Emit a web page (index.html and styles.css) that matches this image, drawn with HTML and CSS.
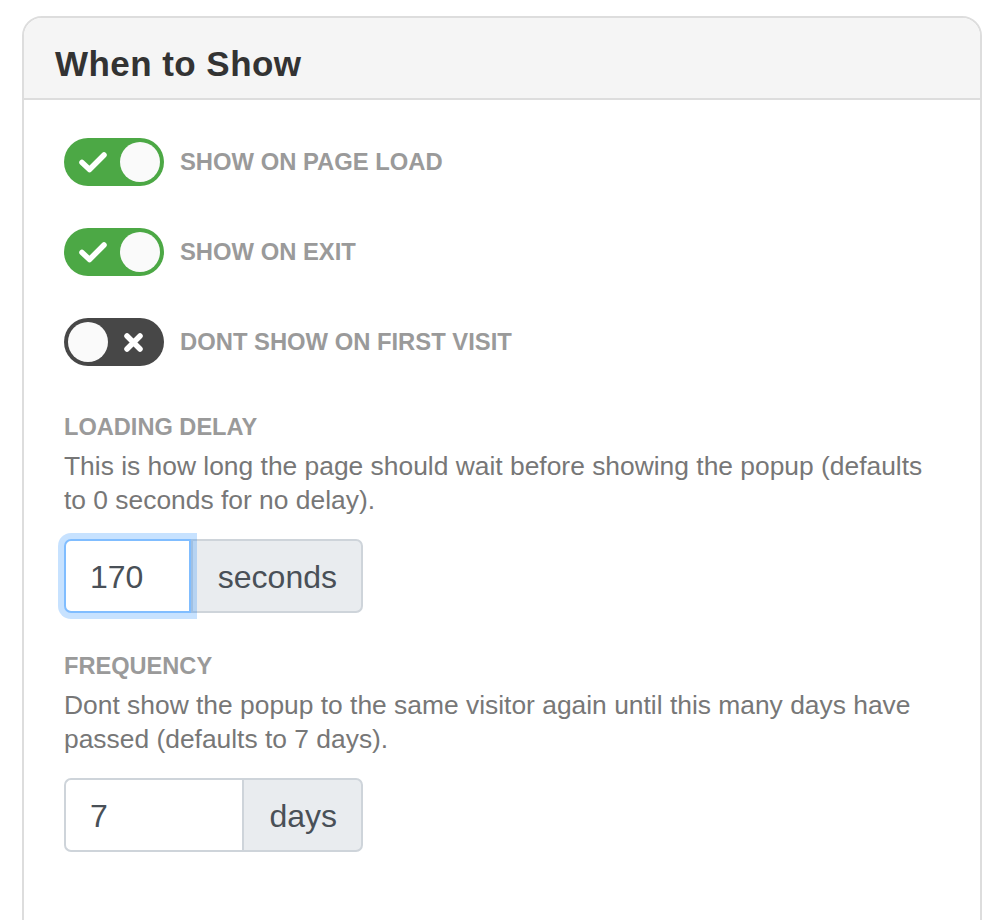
FILE: index.html
```html
<!DOCTYPE html>
<html lang="en">
<head>
<meta charset="utf-8">
<title>When to Show</title>
<link rel="stylesheet" href="styles.css">
</head>
<body>
<div class="card">
  <div class="card-header">
    <h2 class="card-title">When to Show</h2>
  </div>
  <div class="card-body">
    <div class="toggle-row">
      <span class="toggle toggle-on">
        <svg class="toggle-icon" width="100" height="48" viewBox="0 0 100 48"><polyline points="18,24.5 25.5,31.5 40,17" fill="none" stroke="#fff" stroke-width="5.5" stroke-linecap="round" stroke-linejoin="round"/></svg>
        <span class="knob"></span>
      </span>
      <span class="toggle-label">SHOW ON PAGE LOAD</span>
    </div>
    <div class="toggle-row">
      <span class="toggle toggle-on">
        <svg class="toggle-icon" width="100" height="48" viewBox="0 0 100 48"><polyline points="18,24.5 25.5,31.5 40,17" fill="none" stroke="#fff" stroke-width="5.5" stroke-linecap="round" stroke-linejoin="round"/></svg>
        <span class="knob"></span>
      </span>
      <span class="toggle-label">SHOW ON EXIT</span>
    </div>
    <div class="toggle-row">
      <span class="toggle toggle-off">
        <span class="knob"></span>
        <svg class="toggle-icon" width="100" height="48" viewBox="0 0 100 48"><path d="M63 18 L76 31 M76 18 L63 31" fill="none" stroke="#fff" stroke-width="5.5" stroke-linecap="round"/></svg>
      </span>
      <span class="toggle-label">DONT SHOW ON FIRST VISIT</span>
    </div>

    <div class="field field-delay">
      <div class="field-label">LOADING DELAY</div>
      <p class="field-help">This is how long the page should wait before showing the popup (defaults to 0 seconds for no delay).</p>
      <div class="input-group">
        <span class="form-control focused">170</span>
        <span class="addon">seconds</span>
      </div>
    </div>

    <div class="field field-frequency">
      <div class="field-label">FREQUENCY</div>
      <p class="field-help">Dont show the popup to the same visitor again until this many days have passed (defaults to 7 days).</p>
      <div class="input-group">
        <span class="form-control">7</span>
        <span class="addon">days</span>
      </div>
    </div>
  </div>
</div>
</body>
</html>
```

FILE: styles.css
```css
html, body {
  margin: 0;
  padding: 0;
  background: #ffffff;
}

body {
  padding: 16px 24px 0 22px;
  font-family: "Liberation Sans", Arial, Helvetica, sans-serif;
  overflow: hidden;
  height: 920px;
  box-sizing: border-box;
}

.card {
  width: 960px;
  box-sizing: border-box;
  border: 2px solid #dddddd;
  border-radius: 20px 20px 0 0;
  min-height: 1000px;
  background: #ffffff;
  overflow: hidden;
}

.card-header {
  background: #f5f5f5;
  border-bottom: 2px solid #dddddd;
  padding: 26px 31px 0;
  box-sizing: content-box;
  height: 54px;
}

.card-title {
  margin: 0;
  font-size: 35px;
  line-height: 40px;
  font-weight: bold;
  color: #333333;
  letter-spacing: 0.45px;
}

.card-body {
  padding: 38px 40px 40px;
}

.toggle-row {
  display: flex;
  align-items: center;
  gap: 16px;
  margin-bottom: 42px;
}

.toggle {
  position: relative;
  display: flex;
  align-items: center;
  width: 100px;
  height: 48px;
  border-radius: 24px;
  box-sizing: border-box;
  padding: 4px;
  flex: none;
}

.toggle-on {
  background: #4ca845;
  justify-content: flex-end;
}

.toggle-off {
  background: #474747;
  justify-content: flex-start;
}

.toggle-icon {
  position: absolute;
  left: 0;
  top: 0;
}

.knob {
  width: 40px;
  height: 40px;
  border-radius: 50%;
  background: #fafafa;
}

.toggle-label {
  font-size: 23.8px;
  font-weight: bold;
  color: #9a9a9a;
  line-height: 34px;
}

.field-delay {
  margin-top: 44px;
}

.field-frequency {
  margin-top: 36px;
}

.field-label {
  font-size: 23.6px;
  font-weight: bold;
  color: #9a9a9a;
  line-height: 34px;
}

.field-help {
  margin: 5px 0 22px;
  font-size: 26.4px;
  line-height: 34px;
  color: #777777;
}

.input-group {
  display: flex;
  width: 299px;
  height: 74px;
}

.form-control {
  position: relative;
  flex: 1;
  min-width: 0;
  box-sizing: border-box;
  display: flex;
  align-items: center;
  padding: 2px 24px 0;
  font-size: 32px;
  color: #495057;
  background: #ffffff;
  border: 2px solid #ced4da;
  border-right: none;
  border-radius: 7px 0 0 7px;
}

.form-control.focused {
  z-index: 2;
  border: 2px solid #80bdff;
  box-shadow: 0 0 0 6px rgba(0, 123, 255, 0.22);
}

.addon {
  display: flex;
  align-items: center;
  box-sizing: border-box;
  padding: 2px 24px 0 25px;
  font-size: 32px;
  color: #495057;
  background: #e9ecef;
  border: 2px solid #ced4da;
  border-radius: 0 7px 7px 0;
}
```
